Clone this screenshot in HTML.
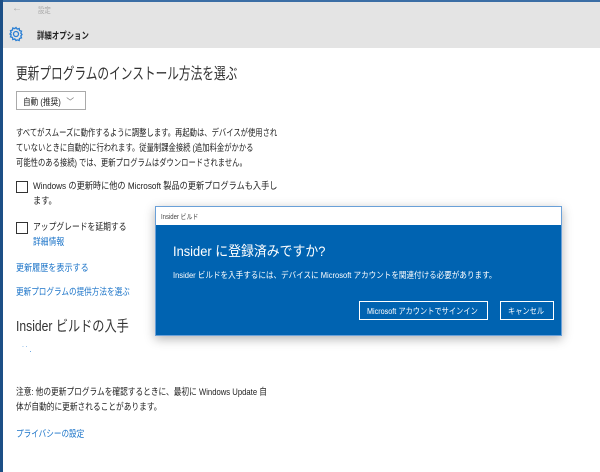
<!DOCTYPE html>
<html><head><meta charset="utf-8"><style>
*{margin:0;padding:0;box-sizing:border-box}
body{width:600px;height:472px;overflow:hidden;background:#fff;font-family:"Liberation Sans","Noto Sans CJK JP",sans-serif;color:#222;position:relative}
.a{position:absolute;white-space:nowrap;transform-origin:0 0}
.lnk{color:#1a73c8;font-size:9.5px}
.t{font-size:9.5px;line-height:15px;color:#222}
.cb{position:absolute;width:12px;height:12px;border:1.5px solid #333}
</style></head><body>
<div class="a" style="left:0;top:0;width:600px;height:2px;background:#3b6ea5"></div>
<div class="a" style="left:0;top:2px;width:600px;height:46px;background:#e4e4e4"></div>
<div class="a" style="left:0;top:0;width:3px;height:472px;background:#1c4f86"></div>
<div class="a" style="left:12px;top:3px;font-size:10px;color:#aaa">←</div>
<div class="a" style="left:38px;top:5px;font-size:8px;color:#aaa;transform:scaleX(.8)">設定</div>
<svg class="a" style="left:8px;top:26px" width="16" height="16" viewBox="0 0 16 16"><g fill="none" stroke="#2a7fd4" stroke-width="1.3"><circle cx="8" cy="8" r="2.5"/><path d="M8 1.5l1.2 1.6 2-.6.3 2 2 .7-.7 1.9 1.2 1.4-1.2 1.4.7 1.9-2 .7-.3 2-2-.6L8 14.5l-1.2-1.6-2 .6-.3-2-2-.7.7-1.9L2 8l1.2-1.4-.7-1.9 2-.7.3-2 2 .6z"/></g></svg>
<div class="a" style="left:37px;top:28px;font-size:9.5px;font-weight:bold;color:#222;transform:scaleX(.78)">詳細オプション</div>
<div class="a" style="left:16px;top:60px;font-size:16px;color:#333;transform:scaleX(.73)">更新プログラムのインストール方法を選ぶ</div>
<div class="a" style="left:16px;top:91px;width:70px;height:19px;border:1.5px solid #aaa"></div>
<div class="a" style="left:23px;top:95px;font-size:9px;color:#222;transform:scaleX(.85)">自動 (推奨) <span style="color:#777;margin-left:4px">﹀</span></div>
<div class="a t" style="left:16px;top:126px;transform:scaleX(.77)">すべてがスムーズに動作するように調整します。再起動は、デバイスが使用され<br>ていないときに自動的に行われます。従量制課金接続 (追加料金がかかる<br>可能性のある接続) では、更新プログラムはダウンロードされません。</div>
<div class="cb" style="left:16px;top:181px"></div>
<div class="a t" style="left:33px;top:179px;transform:scaleX(.86)">Windows の更新時に他の Microsoft 製品の更新プログラムも入手し<br>ます。</div>
<div class="cb" style="left:16px;top:222px"></div>
<div class="a t" style="left:33px;top:220px;transform:scaleX(.82)">アップグレードを延期する</div>
<div class="a lnk" style="left:33px;top:234px;transform:scaleX(.82)">詳細情報</div>
<div class="a lnk" style="left:16px;top:260px;transform:scaleX(.85)">更新履歴を表示する</div>
<div class="a lnk" style="left:16px;top:284px;transform:scaleX(.8)">更新プログラムの提供方法を選ぶ</div>
<div class="a" style="left:16px;top:315px;font-size:15px;color:#333;transform:scaleX(.81)">Insider ビルドの入手</div>
<div class="a" style="left:22px;top:345px;font-size:8px;color:#2a7fd4;letter-spacing:1px">˙˙.</div>
<div class="a t" style="left:16px;top:385px;transform:scaleX(.81)">注意: 他の更新プログラムを確認するときに、最初に Windows Update 自<br>体が自動的に更新されることがあります。</div>
<div class="a lnk" style="left:16px;top:426px;transform:scaleX(.8)">プライバシーの設定</div>
<div class="a" style="left:155px;top:206px;width:407px;height:130px;border:1px solid #6aa0d8;box-shadow:0 3px 10px rgba(0,0,0,.3);background:#0063b1">
<div style="height:18px;background:#fff"></div>
<div class="a" style="left:5px;top:5px;font-size:7px;color:#444;transform:scaleX(.85)">Insider ビルド</div>
<div class="a" style="left:17px;top:34px;font-size:14px;color:#fff;transform:scaleX(.92)">Insider に登録済みですか?</div>
<div class="a" style="left:17px;top:62px;font-size:8.5px;color:#fff;transform:scaleX(.89)">Insider ビルドを入手するには、デバイスに Microsoft アカウントを関連付ける必要があります。</div>
<div class="a" style="left:203px;top:94px;width:129px;height:19px;border:1.5px solid #fff"></div>
<div class="a" style="left:211px;top:98px;color:#fff;font-size:8.5px;transform:scaleX(.85)">Microsoft アカウントでサインイン</div>
<div class="a" style="left:344px;top:94px;width:54px;height:19px;border:1.5px solid #fff"></div>
<div class="a" style="left:352px;top:98px;color:#fff;font-size:8.5px;transform:scaleX(.85)">キャンセル</div>
</div>
</body></html>
